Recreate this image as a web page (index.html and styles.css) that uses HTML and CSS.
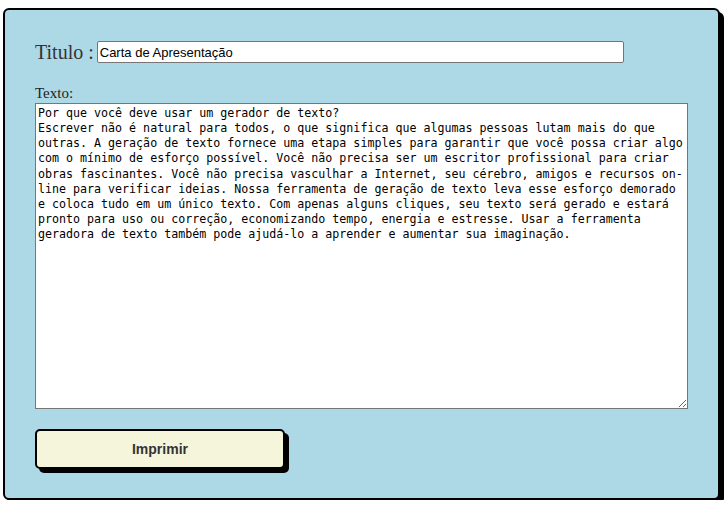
FILE: index.html
```html
<!DOCTYPE html>
<html lang="pt">
<head>
<meta charset="utf-8">
<link rel="stylesheet" href="styles.css">
</head>
<body>
<div class="panel">
  <div class="title-row">
    <label class="title-label" for="titulo">Titulo :</label>
    <input id="titulo" class="title-input" type="text" value="Carta de Apresentação">
  </div>
  <label class="text-label" for="texto">Texto:</label>
  <textarea id="texto" class="text-area">Por que você deve usar um gerador de texto?
Escrever não é natural para todos, o que significa que algumas pessoas lutam mais do que outras. A geração de texto fornece uma etapa simples para garantir que você possa criar algo com o mínimo de esforço possível. Você não precisa ser um escritor profissional para criar obras fascinantes. Você não precisa vasculhar a Internet, seu cérebro, amigos e recursos on-line para verificar ideias. Nossa ferramenta de geração de texto leva esse esforço demorado e coloca tudo em um único texto. Com apenas alguns cliques, seu texto será gerado e estará pronto para uso ou correção, economizando tempo, energia e estresse. Usar a ferramenta geradora de texto também pode ajudá-lo a aprender e aumentar sua imaginação.</textarea>
  <button class="print-btn" type="button">Imprimir</button>
</div>
</body>
</html>
```
FILE: styles.css
```css
html, body {
  margin: 0;
  padding: 0;
  background: #ffffff;
}
body {
  padding: 8px 0 0 3px;
}
.panel {
  box-sizing: border-box;
  width: 717px;
  height: 492px;
  background: #add8e6;
  border: 2px solid #000;
  border-radius: 6px;
  box-shadow: 4px 4px 0 #000;
  padding: 31px 0 0 30px;
  display: flex;
  flex-direction: column;
  align-items: flex-start;
}
.title-row {
  display: flex;
  align-items: center;
  height: 22px;
}
.title-label {
  font-family: "Liberation Serif", serif;
  font-size: 20px;
  color: #333;
  margin-right: 3px;
}
.title-input {
  box-sizing: border-box;
  width: 527px;
  height: 22px;
  border: 1px solid #767676;
  border-radius: 2px;
  padding: 1px 2px;
  font-family: "Liberation Sans", Arial, sans-serif;
  font-size: 13px;
  color: #000;
  background: #fff;
}
.text-label {
  margin-top: 22px;
  margin-bottom: 1px;
  font-family: "Liberation Serif", serif;
  font-size: 15px;
  color: #222;
  line-height: 17px;
}
.text-area {
  box-sizing: border-box;
  width: 653px;
  height: 306px;
  margin: 0;
  border: 1px solid #767676;
  padding: 2px 2px;
  font-family: "DejaVu Sans Mono", monospace;
  font-size: 11.65px;
  line-height: 15.15px;
  color: #000;
  background: #fff;
  resize: both;
}
.print-btn {
  box-sizing: border-box;
  margin-top: 20px;
  width: 250px;
  height: 40px;
  background: #f5f5dc;
  border: 2px solid #000;
  border-radius: 5px;
  box-shadow: 4px 4px 0 #000;
  font-family: "Liberation Sans", Arial, sans-serif;
  font-weight: bold;
  font-size: 14px;
  color: #333;
  padding: 0;
}
```
